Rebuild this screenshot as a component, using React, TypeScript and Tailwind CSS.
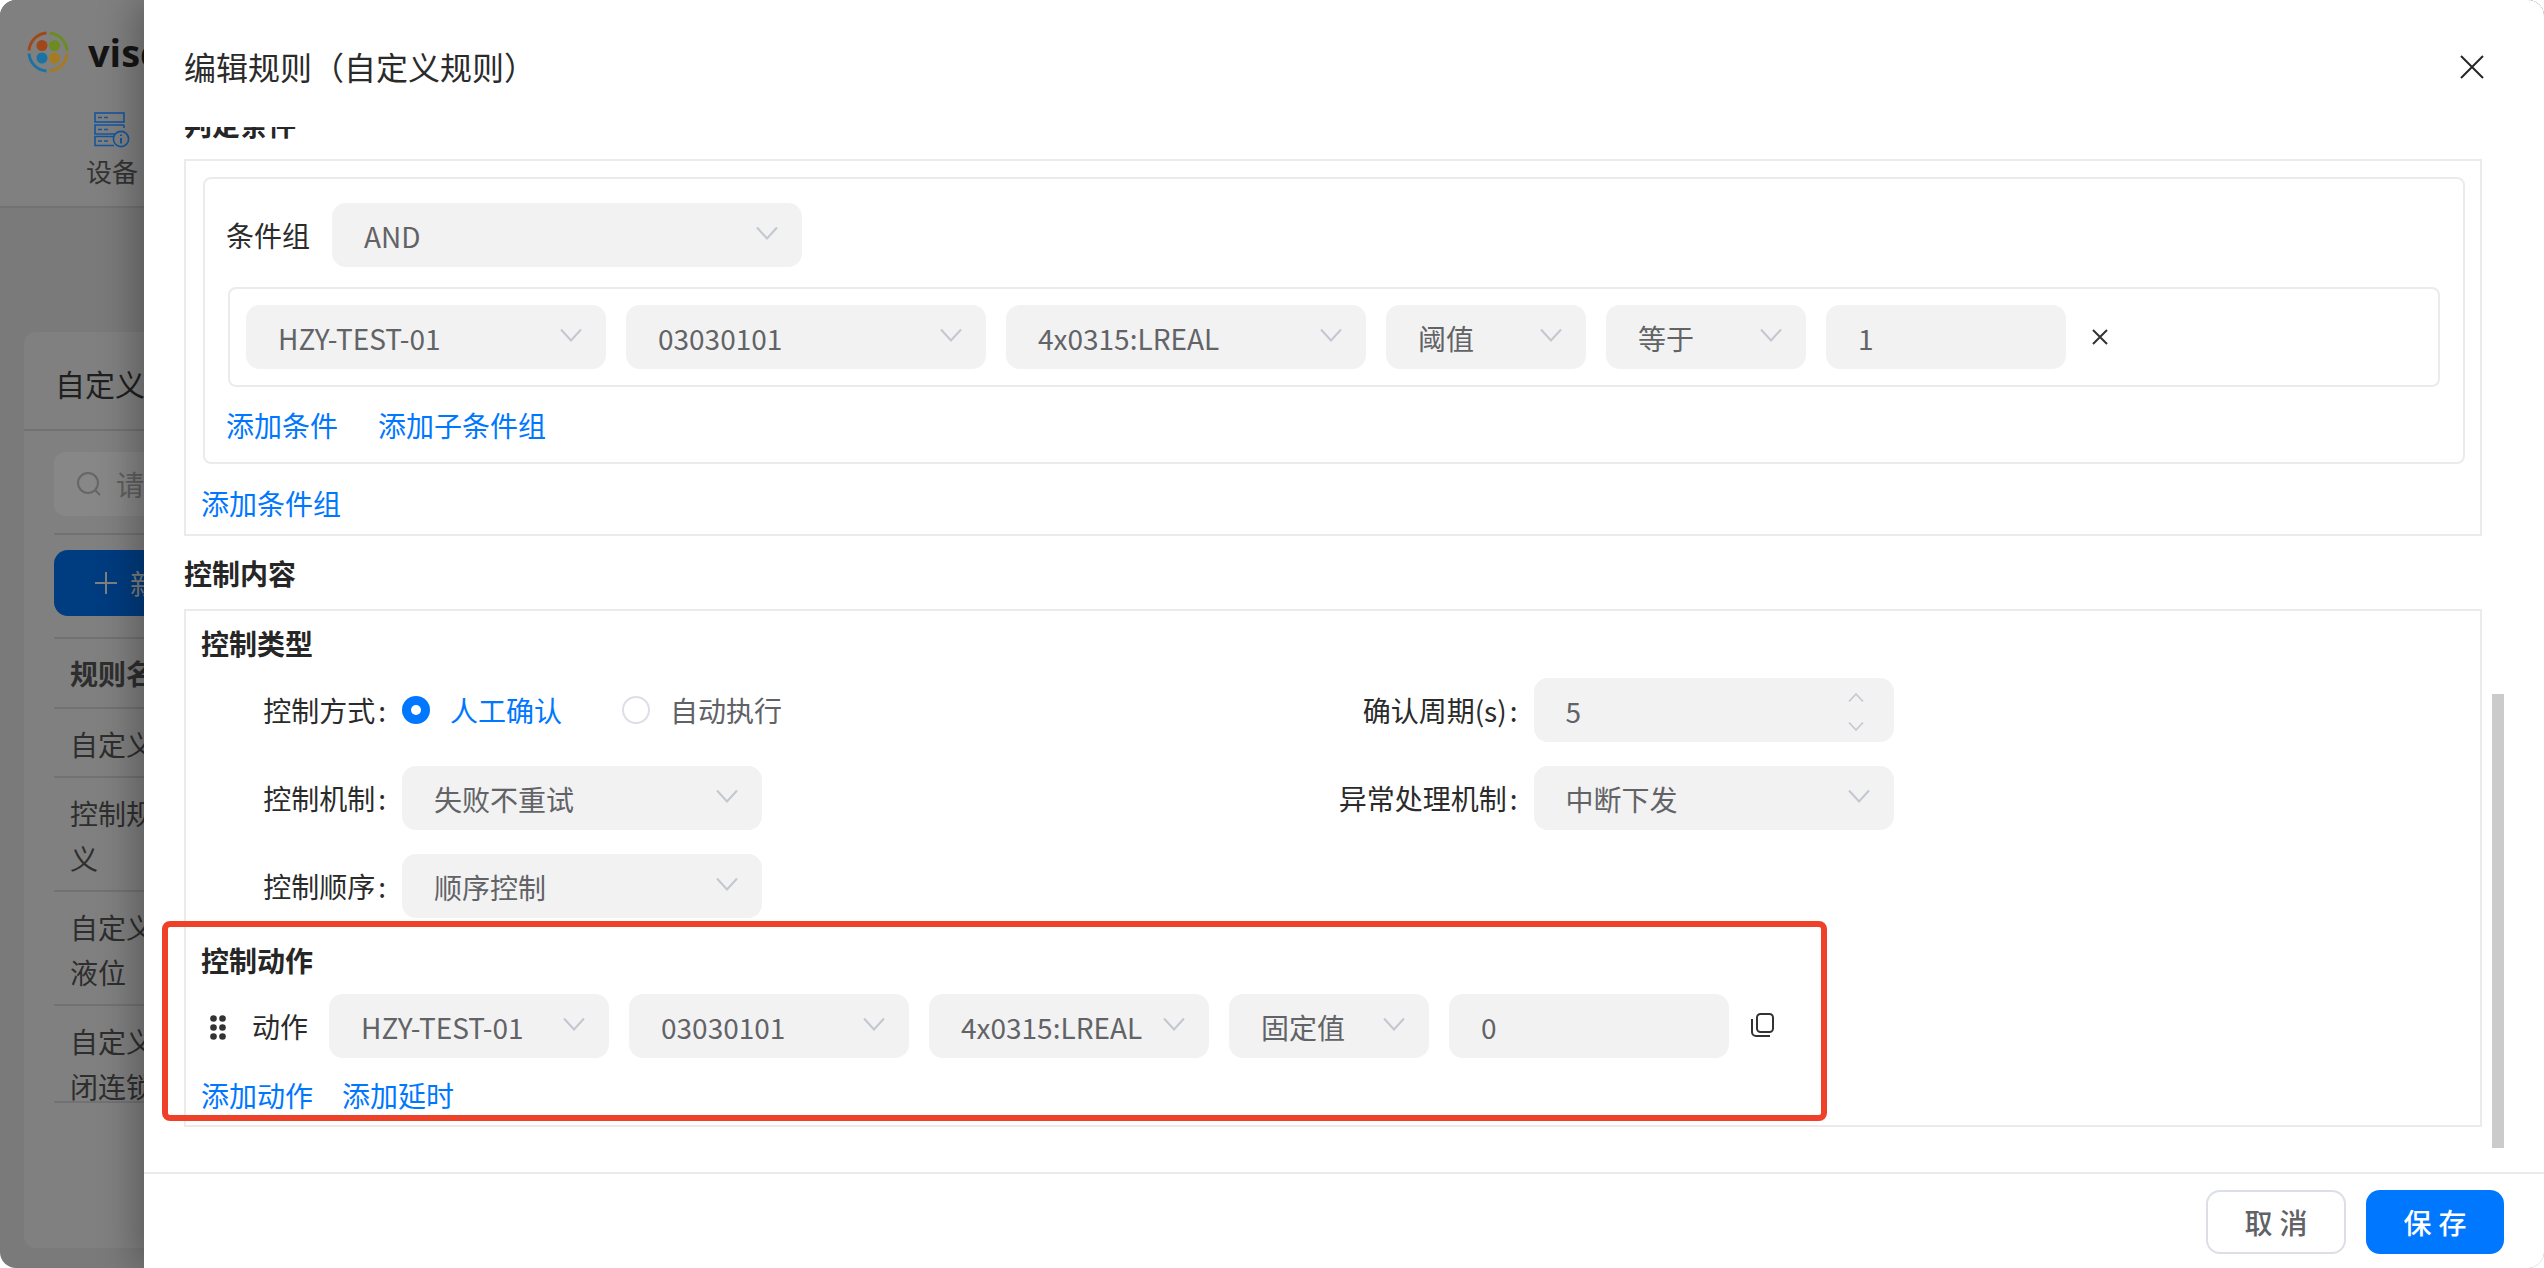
import React from "react";

const FONT = { fontFamily: '"Noto Sans CJK SC", "Noto Sans", sans-serif' };

function Chevron() {
  return (
    <svg width="22" height="14" viewBox="0 0 22 14" fill="none" className="shrink-0">
      <path d="M1 1.5 L11 12.5 L21 1.5" stroke="#c3c7d0" strokeWidth="2" />
    </svg>
  );
}

function Select({ value, w }: { value: string; w: string }) {
  return (
    <div className={`flex h-[64px] ${w} shrink-0 items-center justify-between rounded-[14px] bg-[#f2f2f3] pl-[32px] pr-[24px]`}>
      <span className="pt-[1px] text-[28px] leading-[40px] text-[#626366] whitespace-nowrap">{value}</span>
      <span className="-mt-[4px]"><Chevron /></span>
    </div>
  );
}

function Input({ value, w }: { value: string; w: string }) {
  return (
    <div className={`flex h-[64px] ${w} shrink-0 items-center rounded-[14px] bg-[#f2f2f3] pl-[32px]`}>
      <span className="pt-[1px] text-[28px] leading-[40px] text-[#626366]">{value}</span>
    </div>
  );
}

function Link({ children }: { children: React.ReactNode }) {
  return <span className="text-[28px] leading-[40px] text-[#0077ff] whitespace-nowrap">{children}</span>;
}

function Field({ label, children }: { label: string; children: React.ReactNode }) {
  return (
    <div className="flex items-center gap-[16px]">
      <span className="w-[184px] text-right text-[28px] leading-[40px] text-[#2b2b2b] whitespace-nowrap">
        {label}
        <span className="ml-[3px]">:</span>
      </span>
      {children}
    </div>
  );
}

function Logo() {
  return (
    <svg width="42" height="42" viewBox="0 0 42 42" fill="none">
      <g strokeWidth="3" fill="none">
        <path d="M19.5 2 A19 19 0 0 0 2 19.5" stroke="#a1481a" />
        <path d="M22.5 2 A19 19 0 0 1 40 19.5" stroke="#6c8c20" />
        <path d="M2 22.5 A19 19 0 0 0 19.5 40" stroke="#1b73a3" />
        <path d="M40 22.5 A19 19 0 0 1 22.5 40" stroke="#a67a1f" />
      </g>
      <circle cx="15" cy="14.5" r="5.5" fill="#a1481a" />
      <circle cx="27.5" cy="14.5" r="5.5" fill="#6c8c20" />
      <circle cx="15" cy="27" r="5.5" fill="#1b73a3" />
      <circle cx="27.5" cy="27" r="5.5" fill="#a67a1f" />
    </svg>
  );
}

function DeviceIcon() {
  return (
    <svg width="36" height="36" viewBox="0 0 36 36" fill="none" stroke="#14569f" strokeWidth="1.6">
      <rect x="1" y="1" width="29" height="9" />
      <path d="M4 5.5h4M10 5.5h4" />
      <path d="M30 13H1v9h20" />
      <path d="M30 13v3" />
      <path d="M4 17.5h4M10 17.5h4" />
      <path d="M19 24.5H1v9h19" />
      <path d="M4 29h4M10 29h4" />
      <circle cx="27" cy="27" r="7.6" />
      <path d="M27 26v5.5M27 22.5v1.6" strokeWidth="2" />
    </svg>
  );
}

function PageBehind() {
  const rule = "border-b-2 border-[#727276]";
  return (
    <div className="h-full w-full">
      <div className="h-[208px] border-b-2 border-[#727272] bg-[#808080]">
        <div className="flex items-center gap-[19px] pl-[27px] pt-[31px]">
          <Logo />
          <span className="text-[38px] font-bold leading-[42px] text-[#141414]" style={{ fontFamily: '"Open Sans", sans-serif' }}>visco</span>
        </div>
        <div className="ml-[86px] mt-[39px] flex w-[52px] flex-col items-center">
          <DeviceIcon />
          <span className="mt-[8px] text-[26px] leading-[30px] text-[#333333] whitespace-nowrap">设备</span>
        </div>
      </div>
      <div className="ml-[24px] mt-[124px] h-[916px] w-[600px] rounded-[12px] bg-[#808080]">
        <div className="h-[99px] border-b-2 border-[#727276] pl-[31px] pt-[30px] text-[30px] leading-[42px] text-[#1f1f1f]">自定义规则</div>
        <div className="px-[30px]">
          <div className="mt-[21px] flex h-[64px] items-center gap-[14px] rounded-[12px] bg-[#878787] pl-[22px] text-[28px] text-[#5f5f5f]">
            <svg width="26" height="26" viewBox="0 0 26 26" fill="none" stroke="#666" strokeWidth="2"><circle cx="12" cy="12" r="10" /><path d="M19.5 19.5 L24 24" /></svg>
            <span>请输入</span>
          </div>
          <div className="mt-[17px] border-t-2 border-[#727276]" />
          <div className="mt-[15px] flex h-[66px] w-[300px] items-center gap-[12px] rounded-[14px] bg-[#003c80] pl-[40px] text-[28px] text-[#808080]">
            <svg width="24" height="24" viewBox="0 0 24 24" stroke="#808080" strokeWidth="2"><path d="M12 1v22M1 12h22" /></svg>
            <span>新建</span>
          </div>
          <div className="mt-[21px] border-t-2 border-[#727276]" />
          <div className={`h-[70px] ${rule} pl-[16px] pt-[14px] text-[28px] font-bold leading-[40px] text-[#2e2e2e]`}>规则名称</div>
          {[["自定义规则"], ["控制规则", "义"], ["自定义规则", "液位"]].map((lines) => (
            <div key={lines[0]} className={`${rule} pb-[9px] pl-[16px] pt-[13px] text-[28px] leading-[45px] text-[#2e2e2e]`}>
              {lines.map((l) => <div key={l}>{l}</div>)}
            </div>
          ))}
          <div className={`h-[97px] ${rule} pl-[16px] pt-[13px] text-[28px] leading-[45px] text-[#2e2e2e]`}>
            <div>自定义规则</div>
            <div>闭连锁</div>
          </div>
        </div>
      </div>
    </div>
  );
}

export default function App() {
  return (
    <div className="h-[1268px] w-[2544px] overflow-hidden bg-white" style={FONT}>
      <div className="relative h-full w-full overflow-hidden rounded-[16px] bg-[#7a7a7a]">
        <PageBehind />

        <div className="absolute bottom-0 left-[144px] right-0 top-0 flex flex-col bg-white shadow-[-8px_0_36px_rgba(0,0,0,0.3)]">
          <div className="flex h-[127px] shrink-0 justify-between pl-[40px] pr-[60px] pt-[46px]">
            <span className="text-[32px] leading-[40px] text-[#2b2b2b]">编辑规则（自定义规则）</span>
            <svg width="24" height="24" viewBox="0 0 24 24" className="mt-[9px]" fill="none" stroke="#262626" strokeWidth="2"><path d="M1 1L23 23M23 1L1 23" /></svg>
          </div>

          <div className="flex-1 overflow-hidden px-[40px]">
            <div className="-mt-[23px] w-[2298px]">
              <div className="mb-[15px] text-[28px] font-bold leading-[40px] text-[#262626]">判定条件</div>

              <div className="border-2 border-[#ebebeb] px-[15px] pb-[11px] pt-[16px]">
                <div className="ml-[2px] rounded-[8px] border-2 border-[#ebebeb] pb-[17px] pl-[23px] pr-[23px] pt-[24px]">
                  <div className="-ml-[2px] flex items-center gap-[22px]">
                    <span className="text-[28px] leading-[40px] text-[#2b2b2b]">条件组</span>
                    <Select value="AND" w="w-[470px]" />
                  </div>
                  <div className="mt-[20px] flex items-center gap-[20px] rounded-[8px] border-2 border-[#ebebeb] p-[16px]">
                    <Select value="HZY-TEST-01" w="w-[360px]" />
                    <Select value="03030101" w="w-[360px]" />
                    <Select value="4x0315:LREAL" w="w-[360px]" />
                    <Select value="阈值" w="w-[200px]" />
                    <Select value="等于" w="w-[200px]" />
                    <Input value="1" w="w-[240px]" />
                    <svg width="16" height="16" viewBox="0 0 16 16" className="ml-[6px]" fill="none" stroke="#333" strokeWidth="2"><path d="M1 1L15 15M15 1L1 15" /></svg>
                  </div>
                  <div className="-ml-[2px] mt-[18px] flex gap-[40px]">
                    <Link>添加条件</Link>
                    <Link>添加子条件组</Link>
                  </div>
                </div>
                <div className="mt-[19px]"><Link>添加条件组</Link></div>
              </div>

              <div className="mt-[17px] text-[28px] font-bold leading-[40px] text-[#262626]">控制内容</div>

              <div className="mt-[16px] border-2 border-[#ebebeb] px-[15px] pb-[10px] pt-[12px]">
                <div className="text-[28px] font-bold leading-[40px] text-[#262626]">控制类型</div>

                <div className="mt-[15px] grid grid-cols-2 gap-y-[24px] pl-[1px]">
                  <Field label="控制方式">
                    <div className="flex h-[64px] items-center">
                      <span className="flex h-[28px] w-[28px] items-center justify-center rounded-full bg-[#0077ff]"><span className="h-[10px] w-[10px] rounded-full bg-white" /></span>
                      <span className="ml-[20px] text-[28px] leading-[40px] text-[#0077ff]">人工确认</span>
                      <span className="ml-[60px] h-[28px] w-[28px] rounded-full border-2 border-[#dcdfe6]" />
                      <span className="ml-[20px] text-[28px] leading-[40px] text-[#606266]">自动执行</span>
                    </div>
                  </Field>
                  <Field label="确认周期(s)">
                    <div className="relative flex h-[64px] w-[360px] items-center rounded-[14px] bg-[#f2f2f3] pl-[32px]">
                      <span className="pt-[1px] text-[28px] leading-[40px] text-[#626366]">5</span>
                      <div className="absolute right-[30px] top-[15px] flex flex-col gap-[20px]">
                        <svg width="16" height="9" viewBox="0 0 16 9" fill="none" stroke="#c3c7d0" strokeWidth="1.6"><path d="M1 8.5L8 1L15 8.5" /></svg>
                        <svg width="16" height="9" viewBox="0 0 16 9" fill="none" stroke="#c3c7d0" strokeWidth="1.6"><path d="M1 0.5L8 8L15 0.5" /></svg>
                      </div>
                    </div>
                  </Field>
                  <Field label="控制机制">
                    <Select value="失败不重试" w="w-[360px]" />
                  </Field>
                  <Field label="异常处理机制">
                    <Select value="中断下发" w="w-[360px]" />
                  </Field>
                  <Field label="控制顺序">
                    <Select value="顺序控制" w="w-[360px]" />
                  </Field>
                </div>

                <div className="mt-[22px] text-[28px] font-bold leading-[40px] text-[#262626]">控制动作</div>

                <div className="mt-[14px] flex items-center">
                  <svg width="16" height="26" viewBox="0 0 16 26" fill="#333" className="ml-[9px] mt-[3px] shrink-0">
                    <circle cx="3.5" cy="3.5" r="3.3" /><circle cx="12.5" cy="3.5" r="3.3" />
                    <circle cx="3.5" cy="12.5" r="3.3" /><circle cx="12.5" cy="12.5" r="3.3" />
                    <circle cx="3.5" cy="21.5" r="3.3" /><circle cx="12.5" cy="21.5" r="3.3" />
                  </svg>
                  <span className="ml-[26px] mr-[21px] text-[28px] leading-[40px] text-[#2b2b2b]">动作</span>
                  <div className="flex items-center gap-[20px]">
                    <Select value="HZY-TEST-01" w="w-[280px]" />
                    <Select value="03030101" w="w-[280px]" />
                    <Select value="4x0315:LREAL" w="w-[280px]" />
                    <Select value="固定值" w="w-[200px]" />
                    <Input value="0" w="w-[280px]" />
                  </div>
                  <svg width="24" height="24" viewBox="0 0 24 24" fill="none" stroke="#333" strokeWidth="2" className="ml-[21px] -mt-[2px] shrink-0">
                    <rect x="7" y="1" width="16" height="18" rx="3.5" />
                    <path d="M2 6v13a4 4 0 0 0 4 4h14" />
                  </svg>
                </div>

                <div className="mt-[17px] flex gap-[29px]">
                  <Link>添加动作</Link>
                  <Link>添加延时</Link>
                </div>
              </div>
            </div>
          </div>

          <div className="flex h-[96px] shrink-0 items-start justify-end gap-[20px] border-t-2 border-[#ebebeb] pr-[40px] pt-[16px]">
            <button className="h-[64px] w-[140px] rounded-[14px] border-2 border-[#dcdfe6] bg-white pl-[7px] text-[28px] font-medium tracking-[7px] text-[#606266]">取消</button>
            <button className="h-[64px] w-[138px] rounded-[14px] bg-[#0077ff] pl-[7px] text-[28px] font-medium tracking-[7px] text-white">保存</button>
          </div>

          <div className="absolute left-[2348px] top-[694px] h-[454px] w-[12px] bg-[#cbcbcb]" />
        </div>

        <div className="pointer-events-none absolute left-[162px] top-[921px] h-[200px] w-[1665px] rounded-[8px] border-[6px] border-[#ef4129]" />
      </div>
    </div>
  );
}
